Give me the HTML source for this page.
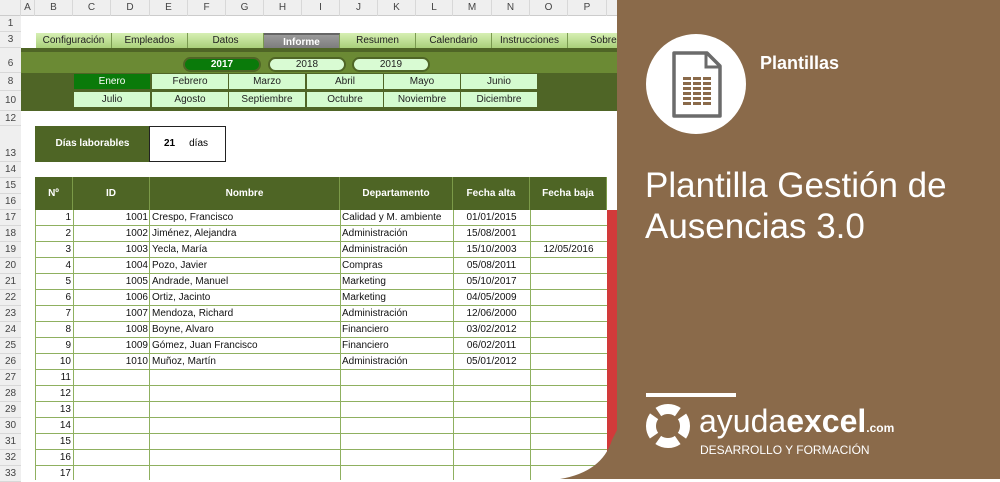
<!DOCTYPE html>
<html><head><meta charset="utf-8">
<style>
*{margin:0;padding:0;box-sizing:border-box}
body{width:1000px;height:479px;overflow:hidden;background:#fff;font-family:"Liberation Sans",sans-serif;position:relative}
.a{position:absolute}
.ch{position:absolute;top:0;height:16px;font-size:10px;color:#444;text-align:center;line-height:16px;border-right:1px solid #d8d8d8}
.rh{position:absolute;left:0;width:21px;font-size:10px;color:#444;text-align:center;border-bottom:1px solid #d8d8d8;background:#efefef}
.tab{position:absolute;top:33px;height:15px;font-size:10px;color:#222;text-align:center;line-height:15px;background:linear-gradient(#d6efb4,#a9d07a);border-right:1px solid #7a9a50}
.yr{position:absolute;top:57px;height:15px;border-radius:8px;border:2px solid #4f6526;font-size:10px;text-align:center;line-height:11px;background:#d9fbd3;color:#222}
.mo{position:absolute;height:15px;width:76px;font-size:10px;text-align:center;line-height:15px;background:#d4fbcf;color:#222}
.t{position:absolute;font-size:10px;color:#111;line-height:16px;white-space:nowrap}
.hd{position:absolute;top:177px;height:33px;background:#4e6525;color:#fff;font-weight:bold;font-size:10px;text-align:center;line-height:33px;border-right:1px solid #7b9a48}
</style></head><body>
<div class="a" style="left:0;top:0;width:620px;height:16px;background:#efefef;border-bottom:1px solid #ccc"></div>
<div class="ch" style="left:0;width:21px"></div>
<div class="ch" style="left:21px;width:14px">A</div>
<div class="ch" style="left:35px;width:38px">B</div>
<div class="ch" style="left:73px;width:38px">C</div>
<div class="ch" style="left:111px;width:39px">D</div>
<div class="ch" style="left:150px;width:38px">E</div>
<div class="ch" style="left:188px;width:38px">F</div>
<div class="ch" style="left:226px;width:38px">G</div>
<div class="ch" style="left:264px;width:38px">H</div>
<div class="ch" style="left:302px;width:38px">I</div>
<div class="ch" style="left:340px;width:38px">J</div>
<div class="ch" style="left:378px;width:38px">K</div>
<div class="ch" style="left:416px;width:37px">L</div>
<div class="ch" style="left:453px;width:39px">M</div>
<div class="ch" style="left:492px;width:38px">N</div>
<div class="ch" style="left:530px;width:38px">O</div>
<div class="ch" style="left:568px;width:39px">P</div>
<div class="a" style="left:0;top:16px;width:21px;height:463px;background:#efefef;border-right:1px solid #ccc"></div>
<div class="rh" style="top:16px;height:16px;line-height:16px">1</div>
<div class="rh" style="top:32px;height:16px;line-height:16px">3</div>
<div class="rh" style="top:48px;height:25px;line-height:32px">6</div>
<div class="rh" style="top:73px;height:18px;line-height:18px">8</div>
<div class="rh" style="top:91px;height:20px;line-height:20px">10</div>
<div class="rh" style="top:111px;height:15px;line-height:15px">12</div>
<div class="rh" style="top:126px;height:36px;line-height:56px">13</div>
<div class="rh" style="top:162px;height:16px;line-height:16px">14</div>
<div class="rh" style="top:178px;height:16px;line-height:16px">15</div>
<div class="rh" style="top:194px;height:16px;line-height:16px">16</div>
<div class="rh" style="top:210px;height:16px;line-height:16px">17</div>
<div class="rh" style="top:226px;height:16px;line-height:16px">18</div>
<div class="rh" style="top:242px;height:16px;line-height:16px">19</div>
<div class="rh" style="top:258px;height:16px;line-height:16px">20</div>
<div class="rh" style="top:274px;height:16px;line-height:16px">21</div>
<div class="rh" style="top:290px;height:16px;line-height:16px">22</div>
<div class="rh" style="top:306px;height:16px;line-height:16px">23</div>
<div class="rh" style="top:322px;height:16px;line-height:16px">24</div>
<div class="rh" style="top:338px;height:16px;line-height:16px">25</div>
<div class="rh" style="top:354px;height:16px;line-height:16px">26</div>
<div class="rh" style="top:370px;height:16px;line-height:16px">27</div>
<div class="rh" style="top:386px;height:16px;line-height:16px">28</div>
<div class="rh" style="top:402px;height:16px;line-height:16px">29</div>
<div class="rh" style="top:418px;height:16px;line-height:16px">30</div>
<div class="rh" style="top:434px;height:16px;line-height:16px">31</div>
<div class="rh" style="top:450px;height:16px;line-height:16px">32</div>
<div class="rh" style="top:466px;height:16px;line-height:16px">33</div>
<div class="tab" style="left:36px;width:76px">Configuración</div>
<div class="tab" style="left:112px;width:76px">Empleados</div>
<div class="tab" style="left:188px;width:76px">Datos</div>
<div class="tab" style="left:264px;width:76px;background:linear-gradient(#9a9a9a,#7d7d7d);color:#fff;font-weight:bold;border-top:2px solid #666">Informe</div>
<div class="tab" style="left:340px;width:76px">Resumen</div>
<div class="tab" style="left:416px;width:76px">Calendario</div>
<div class="tab" style="left:492px;width:76px">Instrucciones</div>
<div class="tab" style="left:568px;width:60px;text-align:left;padding-left:22px">Sobre</div>
<div class="a" style="left:21px;top:48px;width:600px;height:25px;background:#6b8a34;border-top:4px solid #4f6526"></div>
<div class="a" style="left:21px;top:73px;width:600px;height:38px;background:#4f6526"></div>
<div class="yr" style="left:183px;width:78px;background:#0a7a0a;color:#fff;font-weight:bold">2017</div>
<div class="yr" style="left:268px;width:78px">2018</div>
<div class="yr" style="left:352px;width:78px">2019</div>
<div class="mo" style="left:74px;top:74px;background:#0a7a0a;color:#fff">Enero</div>
<div class="mo" style="left:152px;top:74px">Febrero</div>
<div class="mo" style="left:229px;top:74px">Marzo</div>
<div class="mo" style="left:307px;top:74px">Abril</div>
<div class="mo" style="left:384px;top:74px">Mayo</div>
<div class="mo" style="left:461px;top:74px">Junio</div>
<div class="mo" style="left:74px;top:92px">Julio</div>
<div class="mo" style="left:152px;top:92px">Agosto</div>
<div class="mo" style="left:229px;top:92px">Septiembre</div>
<div class="mo" style="left:307px;top:92px">Octubre</div>
<div class="mo" style="left:384px;top:92px">Noviembre</div>
<div class="mo" style="left:461px;top:92px">Diciembre</div>
<div class="a" style="left:35px;top:126px;width:115px;height:36px;background:#4e6525;color:#fff;font-weight:bold;font-size:10px;text-align:center;line-height:36px">Días laborables</div>
<div class="a" style="left:149px;top:126px;width:77px;height:36px;border:1px solid #222;font-size:10px;line-height:34px"><b style="margin-left:14px">21</b><span style="margin-left:14px">días</span></div>
<div class="hd" style="left:35px;width:38px">Nº</div>
<div class="hd" style="left:73px;width:77px">ID</div>
<div class="hd" style="left:150px;width:190px">Nombre</div>
<div class="hd" style="left:340px;width:113px">Departamento</div>
<div class="hd" style="left:453px;width:77px">Fecha alta</div>
<div class="hd" style="left:530px;width:77px">Fecha baja</div>
<div class="a" style="left:35px;top:210px;width:572px;height:270px;background:repeating-linear-gradient(#fff 0 15px,#8fb060 15px 16px)"></div>
<div class="a" style="left:35px;top:210px;width:1px;height:270px;background:#8fb060"></div>
<div class="a" style="left:73px;top:210px;width:1px;height:270px;background:#8fb060"></div>
<div class="a" style="left:149px;top:210px;width:1px;height:270px;background:#8fb060"></div>
<div class="a" style="left:340px;top:210px;width:1px;height:270px;background:#8fb060"></div>
<div class="a" style="left:453px;top:210px;width:1px;height:270px;background:#8fb060"></div>
<div class="a" style="left:530px;top:210px;width:1px;height:270px;background:#8fb060"></div>
<div class="a" style="left:607px;top:210px;width:10px;height:245px;background:#d23a3a"></div>
<div class="t" style="left:35px;top:210px;width:36px;text-align:right">1<br>2<br>3<br>4<br>5<br>6<br>7<br>8<br>9<br>10<br>11<br>12<br>13<br>14<br>15<br>16<br>17</div>
<div class="t" style="left:73px;top:210px;width:75px;text-align:right">1001<br>1002<br>1003<br>1004<br>1005<br>1006<br>1007<br>1008<br>1009<br>1010</div>
<div class="t" style="left:152px;top:210px">Crespo, Francisco<br>Jiménez, Alejandra<br>Yecla, María<br>Pozo, Javier<br>Andrade, Manuel<br>Ortiz, Jacinto<br>Mendoza, Richard<br>Boyne, Alvaro<br>Gómez, Juan Francisco<br>Muñoz, Martín</div>
<div class="t" style="left:342px;top:210px">Calidad y M. ambiente<br>Administración<br>Administración<br>Compras<br>Marketing<br>Marketing<br>Administración<br>Financiero<br>Financiero<br>Administración</div>
<div class="t" style="left:453px;top:210px;width:77px;text-align:center">01/01/2015<br>15/08/2001<br>15/10/2003<br>05/08/2011<br>05/10/2017<br>04/05/2009<br>12/06/2000<br>03/02/2012<br>06/02/2011<br>05/01/2012</div>
<div class="t" style="left:530px;top:242px;width:77px;text-align:center">12/05/2016</div>
<svg class="a" style="left:540px;top:0" width="460" height="479">
<path d="M77 0 H460 V479 H20 Q62 472 72 440 L77 430 Z" fill="#8a6a4a"/>
<circle cx="156" cy="84" r="50" fill="#fff"/>
<path d="M134 53 H167 L180 66 V116 H134 Z" fill="none" stroke="#6b6b6b" stroke-width="3.5" stroke-linejoin="round"/>
<path d="M166 53 V67 H180" fill="none" stroke="#6b6b6b" stroke-width="3"/>
<g fill="#8a6a4a">
<rect x="143" y="77" width="8" height="3"/><rect x="153" y="77" width="8" height="3"/><rect x="163" y="77" width="8" height="3"/>
<rect x="143" y="82" width="8" height="3"/><rect x="153" y="82" width="8" height="3"/><rect x="163" y="82" width="8" height="3"/>
<rect x="143" y="87" width="8" height="3"/><rect x="153" y="87" width="8" height="3"/><rect x="163" y="87" width="8" height="3"/>
<rect x="143" y="92" width="8" height="3"/><rect x="153" y="92" width="8" height="3"/><rect x="163" y="92" width="8" height="3"/>
<rect x="143" y="97" width="8" height="3"/><rect x="153" y="97" width="8" height="3"/><rect x="163" y="97" width="8" height="3"/>
<rect x="143" y="102" width="8" height="3"/><rect x="153" y="102" width="8" height="3"/><rect x="163" y="102" width="8" height="3"/>
</g>
<rect x="106" y="393" width="90" height="4" fill="#fff"/>
<circle cx="128" cy="426" r="17" fill="none" stroke="#fff" stroke-width="10" stroke-dasharray="20.7 6" stroke-dashoffset="10.35"/>
</svg>
<div class="a" style="left:760px;top:53px;color:#fff;font-weight:bold;font-size:18px">Plantillas</div>
<div class="a" style="left:645px;top:165px;color:#fff;font-size:35px;line-height:41px;white-space:nowrap">Plantilla Gestión de<br>Ausencias 3.0</div>
<div class="a" style="left:699px;top:402px;color:#fff;font-size:32px;line-height:38px;white-space:nowrap"><span style="font-weight:300">ayuda</span><b>excel</b><b style="font-size:12px">.com</b></div>
<div class="a" style="left:700px;top:443px;color:#fff;font-size:12px;white-space:nowrap">DESARROLLO Y FORMACIÓN</div>
</body></html>
